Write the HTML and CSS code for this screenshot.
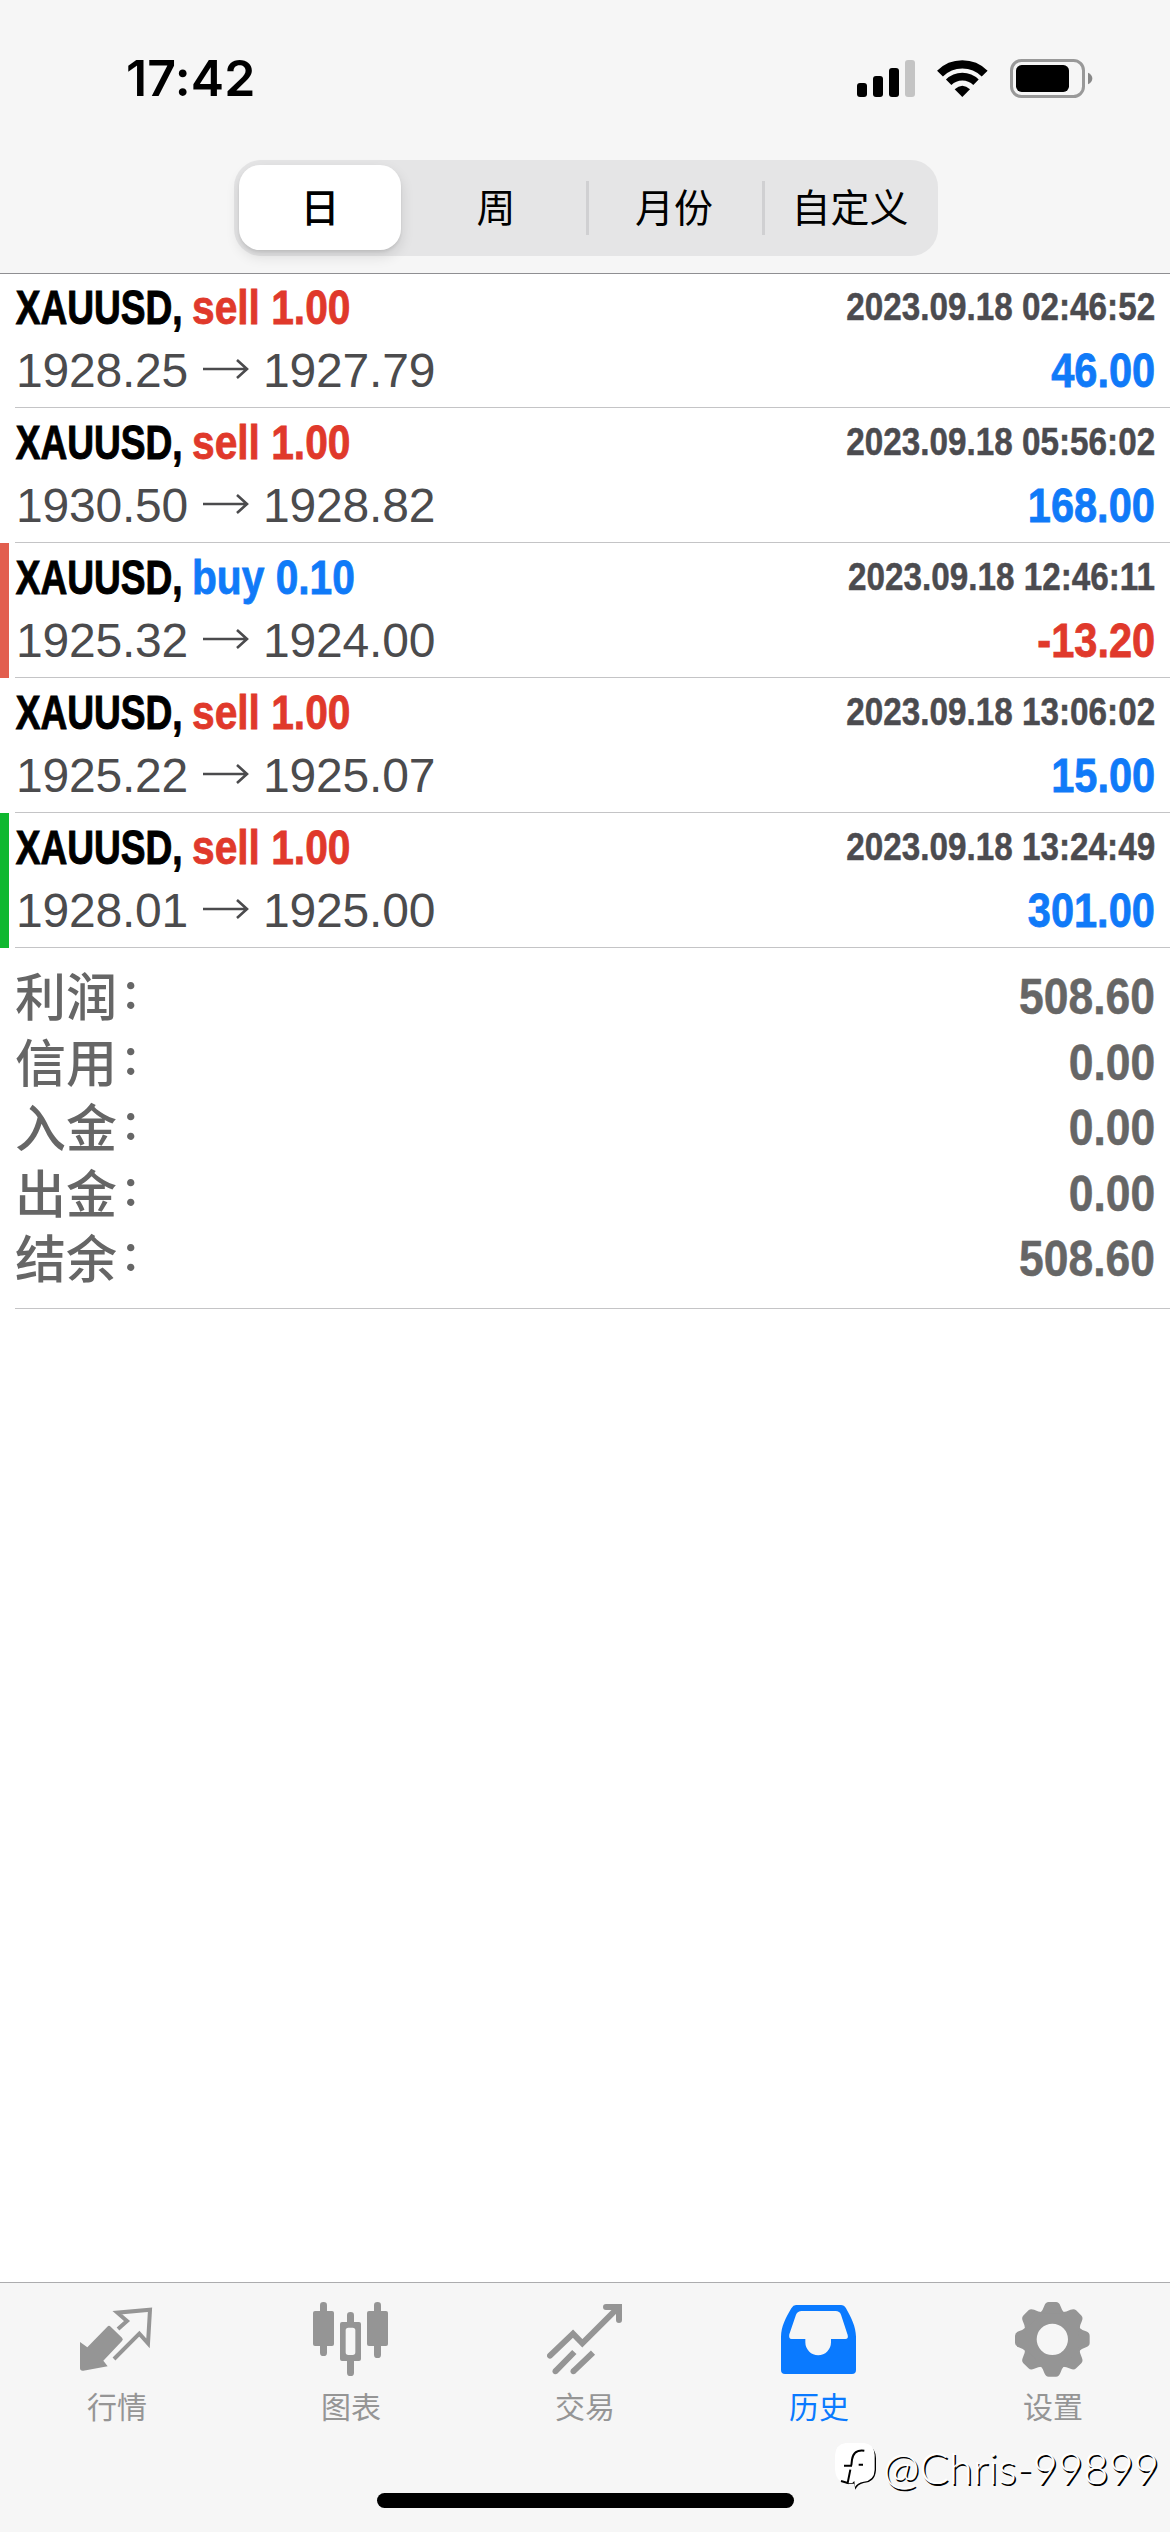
FILE: index.html
```html
<!DOCTYPE html>
<html lang="zh-CN">
<head>
<meta charset="utf-8">
<title>历史</title>
<link rel="stylesheet" href="styles.css">
</head>
<body>
<div class="screen">
  <header class="header">
    <div class="status">
      <span class="time">17:42</span>
      <svg class="status-icons" viewBox="48 54 708 117">
        <rect x="48" y="126" width="30" height="42" rx="9"/>
        <rect x="96" y="105" width="30" height="63" rx="9"/>
        <rect x="144" y="81" width="30" height="87" rx="9"/>
        <rect x="192" y="57" width="30" height="111" rx="9" fill="#c4c4c4"/>
        <path d="M297 98A95 95 0 0 1 431 98" fill="none" stroke="#000" stroke-width="25"/>
        <path d="M323 124A58 58 0 0 1 405 124" fill="none" stroke="#000" stroke-width="23"/>
        <path d="M364 168L341 145Q364 123 387 145Z"/>
        <rect x="511.500" y="58.500" width="216" height="108" rx="30" fill="none" stroke="#999" stroke-width="9"/>
        <rect x="525" y="72" width="159" height="81" rx="17"/>
        <path d="M741 95Q754 101 754 112.500Q754 124 741 130Z" fill="#888"/>
      </svg>
    </div>
    <nav class="segments">
      <span class="segment segment-on">日</span>
      <span class="segment">周</span>
      <span class="segment divided">月份</span>
      <span class="segment divided">自定义</span>
    </nav>
  </header>

  <main class="content">
    <section class="deals">
      <article class="deal">
        <div class="line"><span class="title"><b class="symbol">XAUUSD,</b><b class="side sell">sell 1.00</b></span><time class="date">2023.09.18 02:46:52</time></div>
        <div class="line"><span class="price">1928.25<svg class="arrow" viewBox="0 0 46 22"><path d="M0 11H44M34 2L44 11L34 20"/></svg>1927.79</span><b class="profit gain">46.00</b></div>
      </article>
      <article class="deal">
        <div class="line"><span class="title"><b class="symbol">XAUUSD,</b><b class="side sell">sell 1.00</b></span><time class="date">2023.09.18 05:56:02</time></div>
        <div class="line"><span class="price">1930.50<svg class="arrow" viewBox="0 0 46 22"><path d="M0 11H44M34 2L44 11L34 20"/></svg>1928.82</span><b class="profit gain">168.00</b></div>
      </article>
      <article class="deal mark-red">
        <div class="line"><span class="title"><b class="symbol">XAUUSD,</b><b class="side buy">buy 0.10</b></span><time class="date">2023.09.18 12:46:11</time></div>
        <div class="line"><span class="price">1925.32<svg class="arrow" viewBox="0 0 46 22"><path d="M0 11H44M34 2L44 11L34 20"/></svg>1924.00</span><b class="profit loss">-13.20</b></div>
      </article>
      <article class="deal">
        <div class="line"><span class="title"><b class="symbol">XAUUSD,</b><b class="side sell">sell 1.00</b></span><time class="date">2023.09.18 13:06:02</time></div>
        <div class="line"><span class="price">1925.22<svg class="arrow" viewBox="0 0 46 22"><path d="M0 11H44M34 2L44 11L34 20"/></svg>1925.07</span><b class="profit gain">15.00</b></div>
      </article>
      <article class="deal mark-green">
        <div class="line"><span class="title"><b class="symbol">XAUUSD,</b><b class="side sell">sell 1.00</b></span><time class="date">2023.09.18 13:24:49</time></div>
        <div class="line"><span class="price">1928.01<svg class="arrow" viewBox="0 0 46 22"><path d="M0 11H44M34 2L44 11L34 20"/></svg>1925.00</span><b class="profit gain">301.00</b></div>
      </article>
    </section>

    <section class="summary">
      <div class="total"><span class="label">利润<i class="colon">:</i></span><b class="amount">508.60</b></div>
      <div class="total"><span class="label">信用<i class="colon">:</i></span><b class="amount">0.00</b></div>
      <div class="total"><span class="label">入金<i class="colon">:</i></span><b class="amount">0.00</b></div>
      <div class="total"><span class="label">出金<i class="colon">:</i></span><b class="amount">0.00</b></div>
      <div class="total"><span class="label">结余<i class="colon">:</i></span><b class="amount">508.60</b></div>
    </section>
  </main>

  <footer class="footer">
    <nav class="tabs">
      <a class="tab">
        <svg class="tab-icon" viewBox="237 126 228 228">
          <path d="M240 246L262 262L322 200Q327 195 332 200L366 233Q371 238 366 243L310 302L323 319L250 332Q240 333 240 325Z"/>
          <path d="M354 207L381 183L352 158L450 149L444 250L418 221L342 297" fill="none" stroke="currentColor" stroke-width="12"/>
        </svg>
        <span>行情</span>
      </a>
      <a class="tab">
        <svg class="tab-icon" viewBox="939 126 228 228">
          <rect x="960" y="126" width="21" height="162" rx="10"/>
          <rect x="939" y="153" width="63" height="105" rx="6"/>
          <rect x="1041" y="156" width="21" height="40" rx="10"/>
          <rect x="1041" y="290" width="21" height="58" rx="10"/>
          <path fill-rule="evenodd" d="M1026 186H1077Q1083 186 1083 192V297Q1083 303 1077 303H1026Q1020 303 1020 297V192Q1020 186 1026 186ZM1045 203Q1037 203 1037 211V277Q1037 285 1045 285H1058Q1066 285 1066 277V211Q1066 203 1058 203Z"/>
          <rect x="1122" y="126" width="21" height="168" rx="10"/>
          <rect x="1101" y="153" width="63" height="105" rx="6"/>
        </svg>
        <span>图表</span>
      </a>
      <a class="tab">
        <svg class="tab-icon" viewBox="741 96 228 228">
          <g fill="none" stroke="currentColor" stroke-width="18">
            <path d="M750 257L819 191L847 220L955 112" stroke-linecap="round"/>
            <path d="M918 111H957V150" stroke-linecap="round"/>
            <path d="M766 304L823 246M820 304L879 248"/>
          </g>
          <circle cx="766" cy="304" r="8.500"/>
          <circle cx="820" cy="304" r="8.500"/>
        </svg>
        <span>交易</span>
      </a>
      <a class="tab tab-on">
        <svg class="tab-icon" viewBox="123 66 228 228">
          <path fill-rule="evenodd" d="M168 75H303Q312 75 318 85C335 115 347 140 348 170V270Q348 282 336 282H135Q123 282 123 270V170C124 140 136 115 154 85Q160 75 168 75ZM185 93Q173 93 168 104L148 163Q145 177 155 177H196V187A38.500 38.500 0 0 0 273 187V177H316Q326 177 323 165L303 104Q299 93 287 93Z"/>
        </svg>
        <span>历史</span>
      </a>
      <a class="tab">
        <svg class="tab-icon" viewBox="-112 -112 228 228">
          <defs><path id="tooth" d="M-37 -78Q-28 -88 -24 -101Q-20 -112 -11 -112H11Q20 -112 24 -101Q28 -88 37 -78Z"/></defs>
          <path fill-rule="evenodd" d="M0 -89A89 89 0 0 1 0 89A89 89 0 0 1 0 -89ZM0 -47A47 47 0 0 0 0 47A47 47 0 0 0 0 -47Z"/>
          <use href="#tooth"/>
          <use href="#tooth" transform="rotate(45)"/>
          <use href="#tooth" transform="rotate(90)"/>
          <use href="#tooth" transform="rotate(135)"/>
          <use href="#tooth" transform="rotate(180)"/>
          <use href="#tooth" transform="rotate(225)"/>
          <use href="#tooth" transform="rotate(270)"/>
          <use href="#tooth" transform="rotate(315)"/>
        </svg>
        <span>设置</span>
      </a>
    </nav>
    <div class="home-bar"></div>
    <div class="watermark">
      <svg class="watermark-logo" viewBox="48 54 126 144">
        <path fill="#000" d="M150 62Q170 70 171 100V136Q168 172 134 174Q116 178 109 194L106 176L88 176Q66 172 60 160Z"/>
        <path fill="#fff" d="M80 54H136Q166 58 167 90V134Q166 166 134 170Q114 174 108 186L106 168L100 174H80Q50 170 48 134V90Q50 58 80 54Z"/>
        <path fill="none" stroke="#000" stroke-width="6" d="M136 77Q104 72 99 104L97 121M75 122H99M119 119H132M94 134L86 174L66 168"/>
      </svg>
      <span class="watermark-name">@Chris-99899</span>
    </div>
  </footer>
</div>
</body>
</html>
```
FILE: styles.css
```css
* { box-sizing: border-box; }

body {
  margin: 0;
  background: #fff;
  font-family: "Liberation Sans", "Noto Sans CJK SC", sans-serif;
}

i { font-style: normal; }

.screen {
  display: flex;
  flex-direction: column;
  width: 1170px;
  height: 2532px;
  overflow: hidden;
}

/* Header */
.header {
  height: 274px;
  background: #f6f6f6;
  border-bottom: 1px solid #8f8f92;
}

.status {
  display: flex;
  justify-content: space-between;
  align-items: center;
  height: 160px;
  padding: 0 77px 4px 126px;
}

.time {
  font: 600 50px/60px Inter, sans-serif;
  letter-spacing: 0.2px;
}

.status-icons { width: 236px; height: 39px; }

.segments {
  display: grid;
  grid-template-columns: 172px 180px 176px 176px;
  width: 704px;
  height: 96px;
  margin-left: 234px;
  border-radius: 27px;
  background: #e5e5e6;
  font: 400 39px/90px "Noto Sans CJK SC", sans-serif;
  text-align: center;
}

.segment-on {
  margin: 5px 5px 6px;
  border-radius: 21px;
  background: #fff;
  box-shadow: 0 6px 14px rgba(0, 0, 0, 0.12), 0 2px 3px rgba(0, 0, 0, 0.08);
  font-weight: 500;
  line-height: 80px;
}

.divided {
  background: linear-gradient(#d0d0d2, #d0d0d2) 0 50% / 3px 54px no-repeat;
}

/* Deals */
.content { flex: 1; }

.deal {
  height: 135px;
  padding: 3px 15px 0;
  background: linear-gradient(#c4c4c6, #c4c4c6) 15px 100% / 100% 1px no-repeat;
}

.deal:first-child { height: 134px; padding-top: 2px; }

.mark-red { box-shadow: inset 9px 0 #e25e4e; }
.mark-green { box-shadow: inset 9px 0 #0fb82f; }

.line {
  display: flex;
  justify-content: space-between;
  height: 63px;
  font-size: 48px;
  line-height: 63px;
  white-space: nowrap;
}

.title { display: flex; }

.symbol {
  width: 177px;
  padding-left: 1px;
  transform: scaleX(0.772);
  transform-origin: 0 50%;
  -webkit-text-stroke: 1px;
}

.side {
  transform: scaleX(0.848);
  transform-origin: 0 50%;
  -webkit-text-stroke: 0.8px;
}

.sell, .loss { color: #e0392b; }
.buy, .gain { color: #107af8; }

.date {
  color: #4b4b4f;
  font-size: 39px;
  font-weight: 700;
  line-height: 61px;
  transform: scaleX(0.853);
  transform-origin: 100% 50%;
  -webkit-text-stroke: 0.5px;
}

.price {
  padding-left: 1px;
  color: #4b4b4d;
  letter-spacing: -0.2px;
}

.arrow {
  width: 46px;
  height: 22px;
  margin: 0 14px 0 15px;
  vertical-align: 7px;
  fill: none;
  stroke: currentColor;
  stroke-width: 2.6px;
}

.profit {
  transform: scaleX(0.865);
  transform-origin: 100% 50%;
  -webkit-text-stroke: 0.8px;
}

/* Totals */
.summary {
  height: 361px;
  padding: 17px 15px 0;
  background: linear-gradient(#c4c4c6, #c4c4c6) 15px 100% / 100% 1px no-repeat;
  color: #666;
}

.total {
  display: flex;
  justify-content: space-between;
  height: 65.6px;
  line-height: 65.6px;
}

.label {
  font: 500 51px/65.6px "Liberation Sans", "Noto Sans CJK SC", sans-serif;
}

.colon {
  display: inline-block;
  padding-left: 6px;
  font: 500 51px/65.6px Inter, sans-serif;
  transform: translateY(-7px);
}

.amount {
  font-size: 50px;
  transform: scaleX(0.889);
  transform-origin: 100% 50%;
  -webkit-text-stroke: 0.5px;
}

/* Tab bar */
.footer {
  position: relative;
  height: 250px;
  border-top: 1px solid #acacae;
  background: #f6f6f6;
}

.tabs {
  display: grid;
  grid-template-columns: repeat(5, 1fr);
  height: 210px;
}

.tab {
  display: flex;
  flex-direction: column;
  align-items: center;
  padding-top: 19px;
  color: #959595;
  font: 400 30px/44px "Noto Sans CJK SC", sans-serif;
}

.tab-on { color: #0a7aff; }

.tab-icon {
  width: 76px;
  height: 76px;
  margin-bottom: 5px;
  fill: currentColor;
}

.home-bar {
  width: 417px;
  height: 15px;
  margin: 0 auto;
  border-radius: 8px;
  background: #000;
}

.watermark {
  position: absolute;
  right: 11px;
  bottom: 37px;
  display: flex;
  align-items: center;
  gap: 6px;
}

.watermark-logo { width: 42px; height: 48px; }

.watermark-name {
  color: #fff;
  font: 300 43.6px/56px Lato, sans-serif;
  text-shadow: 1.5px 1.5px 0.5px #000;
}
```
